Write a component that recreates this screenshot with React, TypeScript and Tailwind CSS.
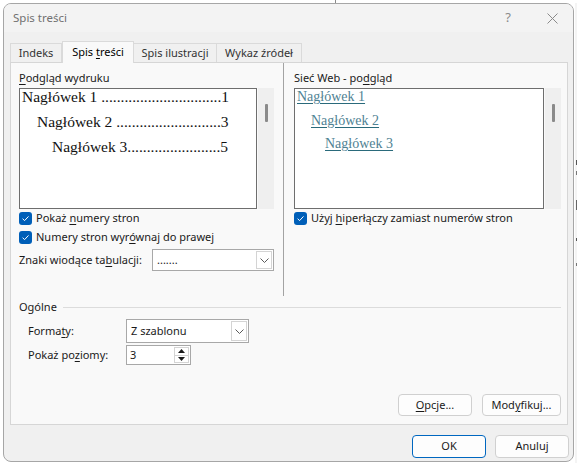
import React from 'react'

function U({ children }: { children: React.ReactNode }) {
  return <span className="underline decoration-1 underline-offset-[2px]">{children}</span>
}

function Check() {
  return (
    <span className="flex h-[13px] w-[13px] shrink-0 items-center justify-center rounded-[3px] bg-[#005fb8]">
      <svg width="9" height="9" viewBox="0 0 9 9">
        <path d="M1.6 4.7 L3.6 6.6 L7.5 2.4" stroke="white" strokeWidth="1" fill="none" />
      </svg>
    </span>
  )
}

function Chevron() {
  return (
    <svg width="9" height="5" viewBox="0 0 9 5">
      <path d="M0.5 0.5 L4.5 4.5 L8.5 0.5" stroke="#5a5a5a" strokeWidth="1" fill="none" />
    </svg>
  )
}

function Select({ value, className }: { value: string; className: string }) {
  return (
    <div className={`flex border border-[#a8a8a8] bg-white ${className}`}>
      <div className="flex flex-1 items-center pl-[4px] text-[#1a1a1a]">{value}</div>
      <div className="m-px flex w-[16px] items-center justify-center border border-[#d4d4d4]">
        <Chevron />
      </div>
    </div>
  )
}

function Button({ children, primary }: { children: React.ReactNode; primary?: boolean }) {
  return (
    <div
      className={`flex h-full w-full items-center justify-center rounded-[4px] border bg-[#fdfdfd] text-[#1a1a1a] ${
        primary ? 'border-[#0067c0]' : 'border-[#d0d0d0]'
      }`}
    >
      {children}
    </div>
  )
}

function TocRow({ indent, title, count, page }: { indent: string; title: string; count: number; page: string }) {
  return (
    <div className={`flex h-[16px] justify-between whitespace-pre leading-[16px] ${indent}`}>
      <span>
        {title}
        {'.'.repeat(count)}
      </span>
      <span>{page}</span>
    </div>
  )
}

function Scroll() {
  return (
    <div className="ml-px h-[121px] w-[16px] bg-[#efefef] pt-[16px] pl-[7px]">
      <div className="h-[18px] w-[3px] rounded-[1px] bg-[#8a8a8a]" />
    </div>
  )
}

export default function App() {
  return (
    <div className="flex h-[463px] w-[577px] flex-col overflow-hidden bg-white font-['Noto_Sans',sans-serif] text-[11px] text-[#1a1a1a]">
      <div className="flex h-[3px] shrink-0">
        <div className="ml-[335px] h-full w-px bg-[#8a8a8a]" />
      </div>
      <div className="flex flex-1">
        <div className="ml-[3px] flex h-[459px] w-[571px] shrink-0 flex-col overflow-hidden rounded-[8px] border border-[#a6a6a6] bg-[#f0f0f0]">
          {/* title bar */}
          <div className="flex h-[28px] shrink-0 items-center bg-[#f3f3f3] pl-[9px] text-[11.5px] text-[#707070]">
            <span>Spis treści</span>
            <span className="ml-auto mr-[36px] text-[13px] text-[#8a8a8a]">?</span>
            <svg className="mr-[15px]" width="11" height="11" viewBox="0 0 11 11">
              <path d="M0.5 0.5 L10.5 10.5 M10.5 0.5 L0.5 10.5" stroke="#8a8a8a" strokeWidth="1" />
            </svg>
          </div>

          {/* tabs */}
          <div className="ml-[6px] mt-[9px] flex h-[22px] shrink-0 items-end">
            <div className="flex h-[20px] w-[52px] items-center justify-center border border-[#dadada] text-[#333]">Indeks</div>
            <div className="relative z-10 flex h-[22px] w-[72px] items-center justify-center border-x border-t border-[#dadada] bg-[#f9f9f9] pb-[1px] text-black">
              <span>
                Spis <U>t</U>reści
              </span>
            </div>
            <div className="flex h-[20px] w-[83px] items-center justify-center border border-l-0 border-[#dadada] text-[#333]">Spis ilustracji</div>
            <div className="flex h-[20px] w-[85px] items-center justify-center border border-l-0 border-[#dadada] text-[#333]">Wykaz źródeł</div>
          </div>

          {/* panel */}
          <div className="ml-[6px] -mt-px flex h-[363px] w-[558px] shrink-0 flex-col border border-[#d6d6d6] bg-[#f9f9f9]">
            <div className="flex h-[233px] shrink-0">
              {/* left column */}
              <div className="flex w-[272px] flex-col pl-[8px] pt-[7px]">
                <div className="h-[16px] leading-[16px]">
                  <U>P</U>odgląd wydruku
                </div>
                <div className="mt-[2px] flex">
                  <div className="flex h-[121px] w-[238px] flex-col gap-[9px] border border-[#6e6e6e] bg-white pl-[2px] pr-[28px] font-['Liberation_Serif',serif] text-[15.5px] text-[#111]">
                    <TocRow indent="" title="Nagłówek 1 " count={31} page="1" />
                    <TocRow indent="pl-[15px]" title="Nagłówek 2 " count={27} page="3" />
                    <TocRow indent="pl-[30px]" title="Nagłówek 3" count={24} page="5" />
                  </div>
                  <Scroll />
                </div>
                <div className="flex h-[19px] items-center gap-[4px]">
                  <Check />
                  <span>
                    Pokaż <U>n</U>umery stron
                  </span>
                </div>
                <div className="flex h-[19px] items-center gap-[4px]">
                  <Check />
                  <span>
                    Numery stron wyr<U>ó</U>wnaj do prawej
                  </span>
                </div>
                <div className="mt-[2px] flex h-[22px] items-center">
                  <span className="w-[133px]">
                    Znaki wiodące ta<U>b</U>ulacji:
                  </span>
                  <Select value="......." className="h-[22px] w-[122px]" />
                </div>
              </div>

              <div className="w-px bg-[#a3a3a3]" />

              {/* right column */}
              <div className="flex flex-1 flex-col pl-[10px] pt-[7px]">
                <div className="h-[16px] leading-[16px]">
                  Sieć Web - po<U>d</U>gląd
                </div>
                <div className="mt-[2px] flex">
                  <div className="flex h-[121px] w-[250px] flex-col gap-[7.5px] border border-[#6e6e6e] bg-white pl-[2px] font-['Liberation_Serif',serif] text-[14px] text-[#4f8293]">
                    <div className="h-[16px] leading-[16px]">
                      <span className="underline decoration-[#2a6a7b] underline-offset-[2px]">Nagłówek 1</span>
                    </div>
                    <div className="h-[16px] pl-[14px] leading-[16px]">
                      <span className="underline decoration-[#2a6a7b] underline-offset-[2px]">Nagłówek 2</span>
                    </div>
                    <div className="h-[16px] pl-[28px] leading-[16px]">
                      <span className="underline decoration-[#2a6a7b] underline-offset-[2px]">Nagłówek 3</span>
                    </div>
                  </div>
                  <Scroll />
                </div>
                <div className="flex h-[19px] items-center gap-[4px]">
                  <Check />
                  <span>
                    Użyj <U>h</U>iperłączy zamiast numerów stron
                  </span>
                </div>
              </div>
            </div>

            {/* Ogólne */}
            <div className="mt-[3px] flex h-[16px] shrink-0 items-center pl-[8px] pr-[6px]">
              <span>Ogólne</span>
              <div className="ml-[6px] h-px flex-1 bg-[#dcdcdc]" />
            </div>
            <div className="mt-[4px] flex h-[24px] shrink-0 items-center pl-[17px]">
              <span className="w-[98px]">
                Forma<U>t</U>y:
              </span>
              <Select value="Z szablonu" className="h-[24px] w-[123px]" />
            </div>
            <div className="mt-[2px] flex h-[20px] shrink-0 items-center pl-[17px]">
              <span className="w-[98px]">
                Pokaż po<U>z</U>iomy:
              </span>
              <div className="flex h-[20px] w-[65px] border border-[#a8a8a8] bg-white">
                <div className="flex flex-1 items-center pl-[3px]">3</div>
                <div className="m-px flex w-[15px] flex-col border border-[#d4d4d4]">
                  <div className="flex flex-1 items-center justify-center border-b border-[#d4d4d4]">
                    <svg width="7" height="4" viewBox="0 0 7 4">
                      <path d="M0 4 L3.5 0 L7 4 Z" fill="#1a1a1a" />
                    </svg>
                  </div>
                  <div className="flex flex-1 items-center justify-center">
                    <svg width="7" height="4" viewBox="0 0 7 4">
                      <path d="M0 0 L3.5 4 L7 0 Z" fill="#1a1a1a" />
                    </svg>
                  </div>
                </div>
              </div>
            </div>

            <div className="flex-1" />
            <div className="flex shrink-0 justify-end gap-[10px] pb-[8px] pr-[6px]">
              <div className="h-[22px] w-[74px]">
                <Button>
                  <span>
                    <U>O</U>pcje...
                  </span>
                </Button>
              </div>
              <div className="h-[22px] w-[79px]">
                <Button>
                  <span>
                    Mod<U>y</U>fikuj...
                  </span>
                </Button>
              </div>
            </div>
          </div>

          {/* dialog buttons */}
          <div className="mt-[10px] flex shrink-0 justify-end gap-[9px] pr-[4px]">
            <div className="h-[23px] w-[74px]">
              <Button primary>OK</Button>
            </div>
            <div className="h-[23px] w-[74px]">
              <Button>Anuluj</Button>
            </div>
          </div>
        </div>

        {/* window behind */}
        <div className="ml-px flex flex-1 flex-col bg-[#f4f4f4] pl-[1px]">
          <div className="h-[157px]" />
          <div className="h-[5px] w-[2px] bg-[#555]" />
          <div className="h-[6px]" />
          <div className="h-[4px] w-[2px] bg-[#777]" />
          <div className="h-[25px]" />
          <div className="h-[10px] w-[2px] bg-[#666]" />
          <div className="h-[28px]" />
          <div className="h-[3px] w-[2px] bg-[#555]" />
          <div className="h-[22px]" />
          <div className="h-[3px] w-[2px] bg-[#777]" />
        </div>
      </div>
    </div>
  )
}
